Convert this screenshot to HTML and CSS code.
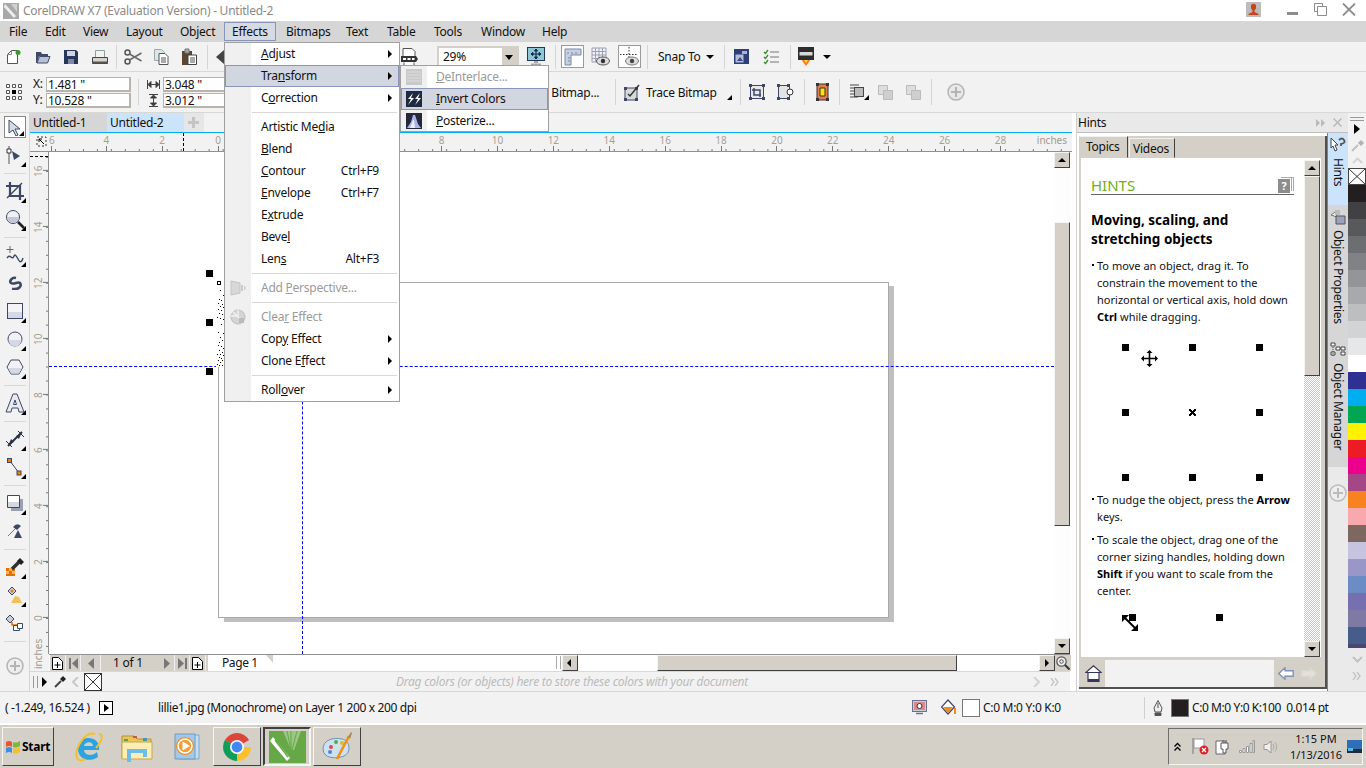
FILE: index.html
```html
<!DOCTYPE html>
<html lang="en">
<head>
<meta charset="utf-8">
<title>CorelDRAW X7</title>
<link rel="stylesheet" href="styles.css">
</head>
<body>
<div class="app">

<header class="titlebar">
  <svg class="t-logo" width="16" height="16" viewBox="0 0 16 16"><rect width="16" height="16" fill="#a9a9a9"/><path d="M2 1l11 12-2 2L1 4z" fill="#eee"/><path d="M8 1h6v8z" fill="#d0d0d0"/></svg>
  <span class="t-text">CorelDRAW X7 (Evaluation Version) - Untitled-2</span>
  <svg class="t-user" width="15" height="15" viewBox="0 0 15 15"><rect width="15" height="15" fill="#bcbcbc"/><path d="M5 3q2.500-2.500 5 0v3.500l-1.500 2v1.500l4 2v1h-10v-1l4-2v-1.500l-1.500-2z" fill="#c8421a"/></svg>
  <span class="t-min"></span>
  <svg class="t-restore" width="13" height="13" viewBox="0 0 13 13"><path d="M.5.5h8v8h-8z" fill="none" stroke="#8c8c8c"/><path d="M3.500 3.500h9v9h-9z" fill="#fff" stroke="#8c8c8c"/></svg>
  <svg class="t-close" width="14" height="13" viewBox="0 0 14 13"><path d="M1 .5l12 12M13 .5l-12 12" stroke="#8c8c8c" stroke-width="1.800"/></svg>
</header>

<nav class="menubar">
  <span class="m m-file">File</span><span class="m m-edit">Edit</span><span class="m m-view">View</span><span class="m m-layout">Layout</span><span class="m m-object">Object</span><span class="m m-effects">Effects</span><span class="m m-bitmaps">Bitmaps</span><span class="m m-text">Text</span><span class="m m-table">Table</span><span class="m m-tools">Tools</span><span class="m m-window">Window</span><span class="m m-help">Help</span>
</nav>

<div class="toolbar">
  <span class="slot s285"><svg width="16" height="16" viewBox="0 0 16 16"><path d="M1.500 5.500l4-4h6v13h-10z" fill="#fff" stroke="#555"/><path d="M1.500 5.500h4v-4" fill="none" stroke="#888"/><circle cx="12" cy="3.500" r="2.500" fill="#3a9a2a"/></svg></span>
  <span class="slot s285"><svg width="16" height="16" viewBox="0 0 16 16"><path d="M1 14V3h5l1 2h6v2H4l-2 7z" fill="#3e4c69"/><path d="M4.500 7.500H15l-2.500 6.500H2z" fill="#b9c1d2" stroke="#3e4c69"/></svg></span>
  <span class="slot s285"><svg width="14" height="14" viewBox="0 0 14 14"><path d="M0 0h12l2 2v12H0z" fill="#26355a"/><path d="M3 1h8v5H3z" fill="#cfd4e0"/><path d="M4 9h6v5H4z" fill="#7e8aa5"/></svg></span>
  <span class="slot s285"><svg width="16" height="14" viewBox="0 0 16 14"><path d="M3.500.5h9v7h-9z" fill="#f2f2f2" stroke="#8aa09a"/><path d="M.5 7.500h15v6H.5z" fill="#d6d4c8" stroke="#444"/><path d="M1 11.500h14v2H1z" fill="#555"/></svg></span>
  <i class="sep sep-a"></i>
  <span class="slot"><svg width="18" height="16" viewBox="0 0 18 16"><circle cx="3.500" cy="3.500" r="2.500" fill="none" stroke="#555" stroke-width="1.500"/><circle cx="3.500" cy="12.500" r="2.500" fill="none" stroke="#555" stroke-width="1.500"/><path d="M5.500 5l12 7M5.500 11l12-7" stroke="#6a6a6a" stroke-width="1.500"/></svg></span>
  <span class="slot"><svg width="15" height="16" viewBox="0 0 15 16"><path d="M.5.500h7l3 3v8h-10z" fill="#dce8e8" stroke="#9aa"/><path d="M5 4.500h6l3 3v8H5z" fill="#fff" stroke="#555"/><path d="M7 9h5M7 11h5M7 13h5" stroke="#555"/></svg></span>
  <span class="slot"><svg width="15" height="17" viewBox="0 0 15 17"><path d="M0 3h10v14H0z" fill="#5a4630"/><path d="M3 1h4v4H3z" fill="#aaa" stroke="#777"/><path d="M6 7h8.500v9.500H6z" fill="#fff" stroke="#444"/><path d="M8 10h5M8 12h5M8 14h5" stroke="#555"/></svg></span>
  <i class="sep sep-b"></i>
  <span class="slot w26"><svg width="10" height="14" viewBox="0 0 10 14"><path d="M8 0L0 7l8 7z" fill="#444"/></svg></span>
  <span class="sp161"></span>
  <span class="slot w28"><svg width="18" height="18" viewBox="0 0 18 18"><path d="M3 .5h9l3 3v5H3z" fill="#fff" stroke="#555"/><path d="M1 8h15l2 3-2 3H1z" fill="#333"/><path d="M4 14.500v3h10v-3" fill="#fff" stroke="#555"/><path d="M3 10h3v2H3zM7.500 10h3v2h-3zM12 10h2.500v2H12z" fill="#fff"/></svg></span>
  <div class="combo"><span class="combo-v">29%</span><span class="combo-b"></span></div>
  <span class="slot w34"><svg width="18" height="20" viewBox="0 0 18 20"><rect x=".5" y=".5" width="17" height="13" fill="#8fc7d6" stroke="#26355a"/><path d="M9 2v10M4 7h10M9 2L7.500 4h3zM9 12l-1.500-2h3zM4 7l2-1.500v3zM14 7l-2-1.500v3z" stroke="#14254a" fill="#14254a"/><path d="M7 14h4v2H7zM4 16.500h10v1.500H4z" fill="#a9a9a9"/></svg></span>
  <i class="sep sep-c"></i>
  <span class="tbtn tb-ruler"><svg width="18" height="18" viewBox="0 0 18 18"><path d="M1 1h16v6H7v10H1z" fill="#c6d0e2" stroke="#7a89a6"/><path d="M4 4v2M8 4v2M12 4v2M4 10h2M4 13h2" stroke="#7a89a6"/></svg></span>
  <span class="slot w33"><svg width="20" height="20" viewBox="0 0 20 20"><path d="M1 1h14v14H1zM1 4.500h14M1 8h14M1 11.500h14M4.500 1v14M8 1v14M11.500 1v14" fill="none" stroke="#9aa0b6"/><ellipse cx="12" cy="14" rx="6.500" ry="4" fill="#ddd" stroke="#555"/><circle cx="12" cy="14" r="2.200" fill="#333"/></svg></span>
  <span class="tbtn tb-guide"><svg width="20" height="20" viewBox="0 0 20 20"><path d="M9 0v15M0 7.500h18" stroke="#333" stroke-dasharray="1.500 1.500"/><ellipse cx="12" cy="14" rx="6.500" ry="4" fill="#ddd" stroke="#777"/><circle cx="12" cy="14" r="2.200" fill="#444"/></svg></span>
  <i class="sep sep-d"></i>
  <span class="snap">Snap To</span><span class="caret caret-snap"></span>
  <i class="sep sep-e"></i>
  <span class="slot w33"><svg width="15" height="15" viewBox="0 0 15 15"><path d="M0 0h15v15H0z" fill="#2e3f78"/><path d="M1.500 5.500h8v8h-8z" fill="#b5bcd8"/><path d="M8 2h5v3H8z" fill="#aab2ce"/><path d="M3 12l3-4 3 4z" fill="#3c4d86"/></svg></span>
  <span class="slot w25"><svg width="16" height="16" viewBox="0 0 16 16"><path d="M1 3l1.500 1.500L5 1M1 8l1.500 1.500L5 6M1 13l1.500 1.500L5 11" fill="none" stroke="#3a8a2e" stroke-width="1.300"/><path d="M7 3h9M7 8h9M7 13h9" stroke="#777" stroke-width="1.200"/></svg></span>
  <i class="sep sep-f"></i>
  <span class="slot w30"><svg width="16" height="19" viewBox="0 0 16 19"><path d="M0 0h16v13H0z" fill="#2c2c2c"/><path d="M1.500 5h13v3.500h-13z" fill="#d7d7d7"/><path d="M4 13h8l-1 2-3 4-3-4z" fill="#ff7a18"/><path d="M6 13h4l-2 3z" fill="#ffd34a"/></svg></span>
  <span class="caret caret-launch"></span>
</div>

<div class="propbar">
  <span class="pb-handles"><svg width="18" height="18" viewBox="0 0 18 18"><path d="M1.500 1.500h3v3h-3zM7.500 1.500h3v3h-3zM13.500 1.500h3v3h-3zM1.500 7.500h3v3h-3zM13.500 7.500h3v3h-3zM1.500 13.500h3v3h-3zM7.500 13.500h3v3h-3zM13.500 13.500h3v3h-3z" fill="#fff" stroke="#555"/><path d="M7 7h4v4H7z" fill="#000"/></svg></span>
  <div class="pb-xy">
    <div class="pb-row"><label>X:</label><span class="inp">1.481 "</span></div>
    <div class="pb-row"><label>Y:</label><span class="inp">10.528 "</span></div>
  </div>
  <i class="sep sep-g"></i>
  <div class="pb-wh">
    <div class="pb-row"><svg width="13" height="9" viewBox="0 0 13 9"><path d="M.5 0v9M12.500 0v9M1 4.500h11M1 4.500l3-3v6zM12 4.500l-3-3v6z" fill="#222" stroke="#444"/></svg><span class="inp">3.048 "</span></div>
    <div class="pb-row"><svg width="9" height="13" viewBox="0 0 9 13"><path d="M0 .5h9M0 12.500h9M4.500 1v11M4.500 1l-3 3h6zM4.500 12l-3-3h6z" fill="#222" stroke="#444"/></svg><span class="inp">3.012 "</span></div>
  </div>
  <span class="pb-bitmap">Edit Bitmap...</span>
  <i class="sep sep-h"></i>
  <span class="slot w20 s-trace"><svg width="16" height="17" viewBox="0 0 16 17"><path d="M1 4h12v12H1z" fill="#d9d9d9" stroke="#3d4866"/><path d="M0 3h3v3H0zM11 3h3v3h-3zM0 14h3v3H0zM11 14h3v3h-3z" fill="#3d4866"/><path d="M4 10l2 2 9-11" fill="none" stroke="#333" stroke-width="1.500"/></svg></span>
  <span class="pb-trace">Trace Bitmap</span>
  <span class="corner-tri tri-trace"></span>
  <i class="sep sep-i"></i>
  <span class="slot w28 s-crop"><svg width="16" height="16" viewBox="0 0 16 16"><path d="M1.500 1.500h13v13h-13z" fill="#e8e8e8" stroke="#3d4866"/><path d="M0 0h3v3H0zM13 0h3v3h-3zM0 13h3v3H0zM13 13h3v3h-3z" fill="#3d4866"/><path d="M5 4v7h7M3 6h8v7" fill="none" stroke="#3d4866" stroke-width="1.500"/></svg></span>
  <span class="slot w28"><svg width="17" height="16" viewBox="0 0 17 16"><path d="M1.500 1.500h11v13h-11z" fill="#e4e4e4" stroke="#3d4866"/><path d="M0 0h3v3H0zM10 0h3v3h-3zM0 13h3v3H0zM10 13h3v3h-3z" fill="#3d4866"/><circle cx="13" cy="8" r="3" fill="#fff" stroke="#333"/></svg></span>
  <i class="sep sep-j"></i>
  <span class="slot w34"><svg width="13" height="18" viewBox="0 0 13 18"><path d="M1 1h11v16H1z" fill="#e87b4a" stroke="#333"/><path d="M4 5h5v8H4z" fill="#ffe500" stroke="#333"/><path d="M0 0h3v3H0zM10 0h3v3h-3zM0 15h3v3H0zM10 15h3v3h-3z" fill="#333"/></svg></span>
  <i class="sep sep-k"></i>
  <span class="slot w36 rel-tri"><svg width="16" height="16" viewBox="0 0 16 16"><path d="M0 1h9M0 4h4M0 7h4M0 10h4M0 13h8" stroke="#444"/><rect x="4.500" y="3.500" width="9" height="9" fill="#bbb" stroke="#444"/></svg></span>
  <span class="slot w18"><svg width="15" height="15" viewBox="0 0 15 15"><path d="M.5.5h9v9h-9z" fill="#ddd" stroke="#bbb"/><path d="M5.500 5.500h9v9h-9z" fill="#cfcfcf" stroke="#bbb"/></svg></span>
  <span class="slot w38"><svg width="15" height="15" viewBox="0 0 15 15"><path d="M.5.5h9v9h-9z" fill="#ddd" stroke="#bbb"/><path d="M5.500 5.500h9v9h-9z" fill="#cfcfcf" stroke="#bbb"/></svg></span>
  <i class="sep sep-l"></i>
  <span class="slot w24 s-plus"><svg width="18" height="18" viewBox="0 0 18 18"><circle cx="9" cy="9" r="8" fill="#e8e8e8" stroke="#b4b4b4" stroke-width="1.500"/><path d="M9 4v10M4 9h10" stroke="#b4b4b4" stroke-width="2"/></svg></span>
</div>

<main class="work">

  <aside class="tools">
    <div class="tool"><span class="tool-sel more"><svg width="14" height="17" viewBox="0 0 14 17"><path d="M1 1l11 9H7l3 6-2 1-3-6-4 3z" fill="#d7dbe6" stroke="#3d4866"/></svg></span></div>
    <div class="tool more"><svg width="18" height="20" viewBox="0 0 18 20"><path d="M3 1v18" stroke="#555"/><path d="M1 4h4v4H1z" fill="#fff" stroke="#333"/><path d="M6 6l8 5-6 4z" fill="#3d4866"/></svg></div>
    <i class="tsep"></i>
    <div class="tool more"><svg width="18" height="18" viewBox="0 0 18 18"><path d="M4 0v14h14M0 4h14v14" fill="none" stroke="#3d4866" stroke-width="2.200"/><path d="M1 16L16 1" stroke="#3d4866" stroke-width="1.500"/></svg></div>
    <div class="tool more"><svg width="20" height="20" viewBox="0 0 20 20"><circle cx="8" cy="8" r="6.500" fill="#f2f2f6" stroke="#3d4866"/><path d="M2 8a6 6 0 0 0 12 0z" fill="#c3c7d6"/><path d="M13 13l6 6" stroke="#222" stroke-width="2.600"/></svg></div>
    <i class="tsep"></i>
    <div class="tool more"><svg width="20" height="20" viewBox="0 0 20 20"><path d="M5 1v7M1.500 4.500h7" stroke="#666"/><path d="M2 13q2-3 4-1t3-1 4 3 5-1" fill="none" stroke="#3d4866" stroke-width="1.400"/></svg></div>
    <div class="tool"><svg width="16" height="14" viewBox="0 0 16 14"><path d="M5 13c7 1 10-3 8-6-2-2-6 2-9 0-2-2 1-6 5-5" fill="none" stroke="#3d4866" stroke-width="2.600"/></svg></div>
    <div class="tool more"><svg width="16" height="16" viewBox="0 0 16 16"><rect x=".5" y=".5" width="15" height="15" fill="#f4f4f8" stroke="#3d4866"/><path d="M1 9h14v6H1z" fill="#d5d7e2"/></svg></div>
    <div class="tool more"><svg width="16" height="16" viewBox="0 0 16 16"><circle cx="8" cy="8" r="7" fill="#f2f2f6" stroke="#3d4866"/><path d="M1.500 9h13a6.500 6.500 0 0 1-13 0z" fill="#d5d7e2"/></svg></div>
    <div class="tool more"><svg width="18" height="16" viewBox="0 0 18 16"><path d="M5 1h8l4 7-4 7H5L1 8z" fill="#f2f2f6" stroke="#3d4866"/><path d="M2 9h14l-3 5.500H5z" fill="#d5d7e2"/></svg></div>
    <i class="tsep"></i>
    <div class="tool more"><svg width="20" height="20" viewBox="0 0 20 20"><path d="M1 19L8 1h4l7 18h-5l-1-4H7l-1 4z" fill="#e8eaf0" stroke="#3d4866"/><path d="M8.500 11.500L10 7l1.500 4.500z" fill="#fff" stroke="#3d4866"/></svg></div>
    <i class="tsep"></i>
    <div class="tool more"><svg width="18" height="16" viewBox="0 0 18 16"><path d="M2 15L16 1" stroke="#2a3146" stroke-width="2"/><path d="M0 10l6 6M12 0l6 6" stroke="#2a3146"/><path d="M3 13l2-5 3 3zM15 3l-2 5-3-3z" fill="#2a3146"/></svg></div>
    <div class="tool more"><svg width="16" height="18" viewBox="0 0 16 18"><path d="M3 3l9 12" stroke="#444"/><rect x=".5" y=".5" width="4" height="4" fill="#f57c00" stroke="#3d4866"/><rect x="10" y="13" width="4" height="4" fill="#f57c00" stroke="#3d4866"/></svg></div>
    <i class="tsep"></i>
    <div class="tool more"><svg width="16" height="16" viewBox="0 0 16 16"><path d="M4 4h12v12H4z" fill="#9a9fb4"/><path d="M.5.500h12v12H.5z" fill="#fff" stroke="#3d4866"/><path d="M1 7h11v5H1z" fill="#d5d7e2"/></svg></div>
    <div class="tool"><svg width="16" height="16" viewBox="0 0 16 16"><path d="M1 13l8-8" stroke="#777"/><path d="M6 4q4-5 8-1l-4 4z" fill="#3d4866"/><path d="M11 7l4 8H7z" fill="#3d4866"/></svg></div>
    <i class="tsep"></i>
    <div class="tool more"><svg width="18" height="18" viewBox="0 0 18 18"><path d="M0 10h9v8H0z" fill="#e07000"/><path d="M3 10h3v3H3zM0 13h3v3H0zM6 13h3v3H6z" fill="#ffb060"/><path d="M6 11l8-8" stroke="#333" stroke-width="3.500"/><path d="M11 3l3-3 4 4-3 3z" fill="#222"/></svg></div>
    <div class="tool more"><svg width="14" height="18" viewBox="0 0 14 18"><path d="M0 5l4-4 4 4-4 4z" fill="#ccd" stroke="#3d4866"/><circle cx="4" cy="5" r="1.500" fill="#f57c00"/><path d="M7 10l4 1 3 6H3z" fill="#f3c05a"/></svg></div>
    <div class="tool"><svg width="17" height="18" viewBox="0 0 17 18"><path d="M0 5l4-4 4 4-4 4z" fill="#ccd" stroke="#3d4866"/><path d="M6 8v3h5" fill="none" stroke="#e07000" stroke-width="1.500"/><path d="M7.500 11.500h6v5h-6z" fill="#fff" stroke="#3d4866"/><path d="M11.500 9.500h5v5h-5z" fill="#fff" stroke="#3d4866"/></svg></div>
    <i class="tsep"></i>
    <div class="tool tool-plus"><svg width="18" height="18" viewBox="0 0 18 18"><circle cx="9" cy="9" r="8" fill="#eee" stroke="#b4b4b4" stroke-width="1.500"/><path d="M9 4v10M4 9h10" stroke="#b4b4b4" stroke-width="2"/></svg></div>
  </aside>

  <section class="doc">
    <div class="doctabs">
      <span class="dt dt-a">Untitled-1</span><span class="dt dt-b">Untitled-2</span><span class="dt-plus"></span>
    </div>
    <div class="rtop-row">
      <span class="corner"><svg width="11" height="11" viewBox="0 0 11 11"><path d="M1 1h9v9H1z" fill="none" stroke="#333" stroke-dasharray="2 2"/><path d="M3 3l5 5M3 3l3 0M3 3v3" stroke="#000"/></svg></span>
      <div class="rtop">
        <b>6</b><b>4</b><b>2</b><b>0</b><b>2</b><b>4</b><b>6</b><b>8</b><b>10</b><b>12</b><b>14</b><b>16</b><b>18</b><b>20</b><b>22</b><b>24</b><b>26</b><b>28</b>
        <span class="rinches">inches</span>
        <i class="rmark"></i>
      </div>
    </div>
    <div class="canvas-row">
      <div class="rleft">
        <b>16</b><b>14</b><b>12</b><b>10</b><b>8</b><b>6</b><b>4</b><b>2</b><b>0</b>
        <span class="rinches-v">inches</span>
        <i class="rmark-h"></i>
      </div>
      <div class="canvas">
        <div class="page-shadow"></div>
        <div class="page"></div>
        <i class="guide-h"></i>
        <i class="guide-v"></i>
        <svg class="speck" width="10" height="87" viewBox="0 0 10 87"><path d="M1 1h4v4H1zM2 2v2h2V2z" fill-rule="evenodd"/><path d="M4 10h1v1H4zM7 15h1v1H7zM3 19h1v1H3zM5 20h1v1H5zM2 23h1v1H2zM6 24h1v1H6zM4 26h1v1H4zM7 27h1v1H7zM2 29h1v1H2zM5 30h1v1H5zM3 33h1v1H3zM6 34h1v1H6zM1 37h1v1H1zM4 38h1v1H4zM7 39h1v1H7zM5 44h1v1H5zM2 52h1v1H2zM7 53h1v1H7zM4 57h1v1H4zM6 60h1v1H6zM3 62h1v1H3zM2 65h1v1H2zM5 66h1v1H5zM7 68h1v1H7zM3 70h1v1H3zM6 72h1v1H6zM1 74h1v1H1zM4 74h1v1H4zM7 75h1v1H7zM3 77h1v1H3zM5 78h1v1H5zM2 80h1v1H2zM6 80h1v1H6zM4 82h1v1H4zM1 84h1v1H1zM3 85h1v1H3zM6 85h1v1H6zM8 84h1v1H8z"/></svg>
        <i class="h h1"></i><i class="h h2"></i><i class="h h3"></i>
      </div>
      <div class="vscroll">
        <span class="sb sb-up"></span>
        <span class="vtrack1"></span>
        <span class="thumb-v"></span>
        <span class="vtrack2"></span>
        <span class="sb sb-down"></span>
      </div>
    </div>
    <div class="hscroll-row">
      <div class="pnav">
        <span class="pn pn-add"><svg width="11" height="13" viewBox="0 0 11 13"><path d="M.5.500h6l4 4v8h-10z" fill="#fff" stroke="#000"/><path d="M5.500 5v6M2.500 8h6" stroke="#000"/></svg></span>
        <span class="pn pn-g"><svg width="9" height="11" viewBox="0 0 9 11"><path d="M0 0h2v11H0zM9 0v11L3 5.500z" fill="#777"/></svg></span>
        <span class="pn pn-g2"><svg width="6" height="11" viewBox="0 0 6 11"><path d="M6 0v11L0 5.500z" fill="#777"/></svg></span>
        <span class="pn-label">1 of 1</span>
        <span class="pn pn-g3"><svg width="6" height="11" viewBox="0 0 6 11"><path d="M0 0v11l6-5.500z" fill="#777"/></svg></span>
        <span class="pn pn-g"><svg width="9" height="11" viewBox="0 0 9 11"><path d="M9 0H7v11h2zM0 0v11l6-5.500z" fill="#777"/></svg></span>
        <span class="pn pn-add"><svg width="11" height="13" viewBox="0 0 11 13"><path d="M.5.500h6l4 4v8h-10z" fill="#fff" stroke="#000"/><path d="M5.500 5v6M2.500 8h6" stroke="#000"/></svg></span>
        <span class="ptab">Page 1</span>
      </div>
      <span class="hsplit"></span>
      <span class="sb sb-left"></span>
      <span class="hgap1"></span>
      <span class="thumb-h"></span>
      <span class="hgap2"></span>
      <span class="sb sb-right"></span>
      <span class="zoomtool"><svg width="14" height="14" viewBox="0 0 14 14"><circle cx="5.500" cy="5.500" r="4.700" fill="#eee" stroke="#555" stroke-width="1.200"/><circle cx="5.500" cy="5.500" r="1.800" fill="none" stroke="#555"/><path d="M9 9l4.500 4.500" stroke="#333" stroke-width="2"/></svg></span>
    </div>
    <div class="colorbar">
      <i class="cb-grip"></i>
      <span class="cb-play"></span>
      <svg class="cb-drop" width="12" height="12" viewBox="0 0 12 12"><path d="M1 11l6-6" stroke="#444" stroke-width="2"/><path d="M6 3l3-3 3 3-3 3z" fill="#222"/></svg>
      <svg class="cb-lt" width="7" height="10" viewBox="0 0 7 10"><path d="M6 0L1 5l5 5" fill="none" stroke="#c9c9c9" stroke-width="2"/></svg>
      <svg class="cb-x" width="18" height="18" viewBox="0 0 18 18"><rect x=".5" y=".5" width="17" height="17" fill="#fff" stroke="#333"/><path d="M1 1l16 16M17 1L1 17" stroke="#333"/></svg>
      <span class="cb-text">Drag colors (or objects) here to store these colors with your document</span>
      <svg class="cb-rt" width="8" height="10" viewBox="0 0 8 10"><path d="M1 0l5 5-5 5" fill="none" stroke="#d2d2d2" stroke-width="2"/></svg>
      <svg class="cb-dbl" width="10" height="8" viewBox="0 0 10 8"><path d="M1 0l3 4-3 4M5 0l3 4-3 4" fill="none" stroke="#c4c4c4" stroke-width="1.300"/></svg>
    </div>
  </section>

  <section class="hintsdock">
    <div class="hd-title"><span class="hd-name">Hints</span>
      <svg class="hd-ff" width="9" height="8" viewBox="0 0 9 8"><path d="M0 0l4 4-4 4zM5 0l4 4-4 4z" fill="#b9b9b9"/></svg>
    </div>
    <div class="hd-body">
      <div class="hd-tabs"><span class="ht ht-on">Topics</span><span class="ht ht-off">Videos</span></div>
      <div class="hd-pane">
        <article class="hd-content">
          <h2 class="hc-head">HINTS<svg width="16" height="16" viewBox="0 0 16 16"><path d="M13.500 0v14M15.500 0v14M3 .5h12" stroke="#aaa" fill="none"/><rect y="2" width="12" height="14" fill="#8d8d8d"/><text x="6" y="13" text-anchor="middle" fill="#fff" font-size="11" font-weight="700" font-family="Noto Sans">?</text></svg></h2>
          <h3 class="hc-title">Moving, scaling, and stretching objects</h3>
          <ul class="hc-list"><li>To move an object, drag it. To constrain the movement to the horizontal or vertical axis, hold down <b>Ctrl</b> while dragging.</li></ul>
          <div class="hc-grid">
            <i></i><i></i><i></i><i></i><em class="hc-x"></em><i></i><i></i><i></i><i></i>
            <svg class="hc-move" width="17" height="17" viewBox="0 0 17 17"><path d="M8.500 1v15M1 8.500h15" stroke="#000" stroke-width="1.600"/><path d="M8.500 0l-3 3h6zM8.500 17l-3-3h6zM0 8.500l3-3v6zM17 8.500l-3-3v6z"/></svg>
          </div>
          <ul class="hc-list hc-l2">
            <li>To nudge the object, press the <b>Arrow</b> keys.</li>
            <li>To scale the object, drag one of the corner sizing handles, holding down <b>Shift</b> if you want to scale from the center.</li>
          </ul>
          <div class="hc-grid2"><i></i><i></i>
            <svg class="hc-diag" width="16" height="16" viewBox="0 0 16 16"><path d="M2 2l12 12" stroke="#000" stroke-width="2"/><path d="M0 0h7L0 7zM16 16H9l7-7z"/></svg>
          </div>
        </article>
        <div class="hd-scroll">
          <span class="sb sb-up"></span>
          <span class="hd-thumb"></span>
          <span class="hd-hatch"></span>
          <span class="sb sb-down"></span>
        </div>
      </div>
      <div class="hd-foot">
        <span class="hf-home"><svg width="17" height="17" viewBox="0 0 17 17"><path d="M8.500.8L.8 7.500h15.400z" fill="#fff" stroke="#33395a" stroke-width="1.200"/><path d="M3 7.500h11v9H3z" fill="#fff" stroke="#33395a" stroke-width="1.200"/><path d="M3 14h11v2.500H3z" fill="#33395a"/></svg></span>
        <span class="hf-mid"></span>
        <span class="hf-arrows">
          <svg width="16" height="13" viewBox="0 0 16 13"><path d="M.8 6.500L7 .8v3h8.200v5.400H7v3z" fill="#fff" stroke="#7f92b8" stroke-width="1.400"/></svg>
          <svg width="16" height="13" viewBox="0 0 16 13"><path d="M15.200 6.500L9 .8v3H.8v5.400H9v3z" fill="#e3e1db" stroke="#dbd8d1" stroke-width="1.400"/></svg>
        </span>
      </div>
    </div>
  </section>

  <section class="dockers">
    <div class="dk-top"><svg width="9" height="9" viewBox="0 0 9 9"><path d="M.5.500l8 8M8.500.500l-8 8" stroke="#b9b9b9" stroke-width="1.500"/></svg></div>
    <div class="dk-list">
      <div class="dk dk-on"><svg width="16" height="16" viewBox="0 0 16 16"><path d="M1 1l7 7H5l2 5-2 1-2-5-2 2z" fill="#fff" stroke="#444"/><path d="M9 3q3-3 5 0t-3 4v2" fill="none" stroke="#555" stroke-width="1.800"/></svg><span>Hints</span></div>
      <div class="dk"><svg width="16" height="16" viewBox="0 0 16 16"><path d="M5 3L1 6l6 2z" fill="#eee" stroke="#777"/><path d="M6 7h9v8H6z" fill="#9aa2c0" stroke="#555"/><path d="M5 1h5v5H5z" fill="#bbb"/></svg><span>Object Properties</span></div>
      <div class="dk dk3"><svg width="16" height="16" viewBox="0 0 16 16"><path d="M1 1h4v3H1zM6 5h4v3H6zM11 5h4v3h-4zM1 10h4v3H1zM11 10h4v3h-4z" fill="#fff" stroke="#444"/><path d="M3 5v10" stroke="#444" stroke-dasharray="1 1"/></svg><span>Object Manager</span></div>
      <div class="dk-plus"><svg width="18" height="18" viewBox="0 0 18 18"><circle cx="9" cy="9" r="8" fill="#eee" stroke="#bbb" stroke-width="1.500"/><path d="M9 4v10M4 9h10" stroke="#bbb" stroke-width="2"/></svg></div>
    </div>
  </section>

  <aside class="palette">
    <div class="pal-top">
      <i class="pal-grip"></i>
      <span class="pal-play"></span>
      <svg class="pal-drop" width="13" height="13" viewBox="0 0 13 13"><path d="M1 12l6-6" stroke="#c0c0c0" stroke-width="2"/><path d="M7 4l3-3 3 3-3 3z" fill="#b0b0b0"/></svg>
      <svg class="pal-up" width="11" height="7" viewBox="0 0 11 7"><path d="M1 6l4.500-4.500L10 6" fill="none" stroke="#d4d4d4" stroke-width="2"/></svg>
    </div>
    <svg class="pal-none" width="18" height="17" viewBox="0 0 18 17"><rect x=".5" y=".5" width="17" height="16" fill="#fff" stroke="#444"/><path d="M1 1l16 15M17 1L1 16" stroke="#333"/></svg>
    <div class="swatches">
      <i class="c01"></i><i class="c02"></i><i class="c03"></i><i class="c04"></i><i class="c05"></i><i class="c06"></i><i class="c07"></i><i class="c08"></i><i class="c09"></i><i class="c10"></i><i class="c11"></i><i class="c12"></i><i class="c13"></i><i class="c14"></i><i class="c15"></i><i class="c16"></i><i class="c17"></i><i class="c18"></i><i class="c19"></i><i class="c20"></i><i class="c21"></i><i class="c22"></i><i class="c23"></i><i class="c24"></i><i class="c25"></i><i class="c26"></i><i class="c27"></i><i class="c28"></i>
    </div>
    <div class="pal-bot">
      <svg width="11" height="7" viewBox="0 0 11 7"><path d="M1 1l4.500 4.500L10 1" fill="none" stroke="#bfc2c9" stroke-width="2"/></svg>
      <svg width="10" height="8" viewBox="0 0 10 8"><path d="M1 0l3 4-3 4M5 0l3 4-3 4" fill="none" stroke="#bfc2c9" stroke-width="1.300"/></svg>
    </div>
  </aside>
</main>

<footer class="status">
  <span class="st-xy">( -1.249, 16.524 )</span>
  <span class="st-box"></span>
  <span class="st-info">lillie1.jpg (Monochrome) on Layer 1 200 x 200 dpi</span>
  <svg class="st-mon" width="15" height="15" viewBox="0 0 15 15"><rect x=".5" y=".5" width="14" height="11" fill="#c9ccdb" stroke="#6b728f"/><rect x="2" y="2" width="11" height="8" fill="#d98a8a"/><circle cx="7.500" cy="6" r="2.500" fill="#fff" stroke="#333"/><path d="M4 13.500h7" stroke="#6b728f" stroke-width="1.500"/></svg>
  <svg class="st-fill" width="16" height="17" viewBox="0 0 16 17"><path d="M7 1L.5 8 7 15l6.500-7z" fill="#fff" stroke="#3d4866" stroke-width="1.200"/><path d="M2 8h10l-5 6z" fill="#f08a1a"/><path d="M14 9v6" stroke="#f08a1a" stroke-width="2"/></svg>
  <span class="st-swatch st-white"></span>
  <span class="st-cmyk">C:0 M:0 Y:0 K:0</span>
  <i class="st-sep"></i>
  <svg class="st-pen" width="10" height="16" viewBox="0 0 10 16"><path d="M5 .5L9 8l-1 4H2L1 8z" fill="#eee" stroke="#555"/><path d="M2 13h6v2.500H2zM5 3v5" fill="#555" stroke="#555"/></svg>
  <span class="st-swatch st-black"></span>
  <span class="st-cmyk2">C:0 M:0 Y:0 K:100&nbsp; 0.014 pt</span>
</footer>

<div class="taskbar">
  <span class="tk-start"><svg width="16" height="15" viewBox="0 0 16 15"><path d="M1 3q3-2 6 0v5q-3-2-6 0z" fill="#e8582a"/><path d="M8 3q3 1.500 7-1v5q-4 2.500-7 1z" fill="#7cb93a"/><path d="M1 9q3-2 6 0v5q-3-2-6 0z" fill="#3f8fe0"/><path d="M8 9q3 1.500 7-1v5q-4 2.500-7 1z" fill="#f6c02c"/></svg><b>Start</b></span>
  <span class="tk-ico tk-ie"><svg width="30" height="32" viewBox="0 0 30 32"><path d="M15 7c8 0 12 5 11 12H11c0 5 8 7 13 2l1 5c-9 6-20 2-20-8C5 12 9 7 15 7zm-4 8h9c0-5-8-5-9 0z" fill="#2ba4e0"/><path d="M26 3c5 0 3 7-3 14M22 3C12 0 1 18 4 27c1 3 5 3 8 1" fill="none" stroke="#f4c02a" stroke-width="2"/></svg></span>
  <span class="tk-ico tk-fold"><svg width="32" height="30" viewBox="0 0 32 30"><path d="M1 4h12l3 3h14v19H1z" fill="#e9c55d" stroke="#b79331"/><path d="M3 7h4v2H3z" fill="#5aa14a"/><path d="M12 4h4v2h-4z" fill="#c54"/><path d="M22 6h4v3h-4z" fill="#49a"/><path d="M1 10h30v17H1z" fill="#fbeeb5" stroke="#caa64a"/><path d="M6 17h20v8h-4v-4H10v9H6z" fill="#6ebde8"/></svg></span>
  <span class="tk-ico tk-wmp"><svg width="30" height="28" viewBox="0 0 30 28"><path d="M8 2h20v24H8z" fill="#c7dcef" stroke="#7fa8cc"/><path d="M4 1h20v25H4z" fill="#a4c8e6" stroke="#6d9cc4"/><circle cx="14" cy="13" r="9" fill="#f08a1a"/><circle cx="14" cy="13" r="7" fill="#f59f33" stroke="#fff" stroke-width="1.600"/><path d="M11.500 8.500l7.500 4.500-7.500 4.500z" fill="#fff"/></svg></span>
  <span class="tk-btn tk-chrome"><svg width="30" height="30" viewBox="0 0 30 30"><path d="M15 15L2.900 8A14 14 0 0 1 27.100 8z" fill="#db4437"/><path d="M15 15h14A14 14 0 0 1 15 29z" fill="#fbc02d"/><path d="M15 15v14A14 14 0 0 1 2.900 8z" fill="#0f9d58"/><circle cx="15" cy="15" r="7" fill="#fff"/><circle cx="15" cy="15" r="5.400" fill="#4285f4"/></svg></span>
  <span class="tk-btn tk-corel"><svg width="37" height="32" viewBox="0 0 37 32"><rect width="37" height="32" fill="#66a846"/><path d="M4 6l17 21-3 3L1 10z" fill="#fff"/><path d="M6 9l13 17" stroke="#66a846" stroke-width="1.500"/><path d="M14 0h18l-7 19h-3z" fill="#9bc785"/><path d="M22 0v19M18 0l4 19M28 0l-5 19" stroke="#66a846"/></svg></span>
  <span class="tk-btn tk-paint"><svg width="32" height="32" viewBox="0 0 32 32"><path d="M2 18C2 9 12 6 21 8s9 14 2 17-21 3-21-7z" fill="#cfe0ef" stroke="#6e93b4"/><circle cx="10" cy="16" r="2" fill="#d94a4a"/><circle cx="15" cy="11" r="2" fill="#49b04a"/><circle cx="21" cy="12" r="2" fill="#e8b52d"/><circle cx="9" cy="21" r="2" fill="#4a86d9"/><path d="M16 28L28 5" stroke="#e8941a" stroke-width="2.600"/><path d="M27 6l3-5 1 1-2 6z" fill="#a8855a"/></svg></span>
  <span class="tk-fill"></span>
  <div class="tray">
    <svg class="tr-up" width="7" height="10" viewBox="0 0 7 10"><path d="M.5 4.500l3-3 3 3M.5 8.500l3-3 3 3" fill="none" stroke="#000" stroke-width="1.300"/></svg>
    <svg class="tr-flag" width="17" height="17" viewBox="0 0 17 17"><path d="M1 0v16" stroke="#777"/><path d="M2 1h10v9H2z" fill="#fff" stroke="#999"/><circle cx="12" cy="12" r="4.500" fill="#d9232a"/><path d="M10 10l4 4M14 10l-4 4" stroke="#fff" stroke-width="1.200"/></svg>
    <svg class="tr-pow" width="15" height="16" viewBox="0 0 15 16"><path d="M1 2h9v13H1z" fill="#fff" stroke="#666"/><path d="M6 4h7v6h-2v4H8v-4H6z" fill="#fff" stroke="#555"/><path d="M8 1v3M11 1v3" stroke="#555"/></svg>
    <svg class="tr-net" width="16" height="13" viewBox="0 0 16 13"><path d="M.5 10.500h2v2h-2zM4 8.500h2v4H4zM7.500 6.500h2v6h-2zM11 3.500h2v9h-2zM14 .5h1.500v12H14z" fill="#fff" stroke="#999"/></svg>
    <svg class="tr-vol" width="15" height="14" viewBox="0 0 15 14"><path d="M1 4.500h3L8 1v12L4 9.500H1z" fill="#eee" stroke="#999"/><path d="M10 4q2 3 0 6M12 2.500q3.500 4.500 0 9" fill="none" stroke="#aaa"/></svg>
    <div class="clock"><span>1:15 PM</span><span>1/13/2016</span></div>
    <svg class="tr-desk" width="15" height="13" viewBox="0 0 15 13"><rect width="15" height="13" fill="#2e70b8"/><path d="M0 9h15v4H0z" fill="#222d3c"/><path d="M1 8h5v3H1z" fill="#5ab8e0"/></svg>
  </div>
</div>

<!-- Effects menu: floats over the workspace -->
<div class="popup effects">
  <div class="pi arrow"><span><u>A</u>djust</span></div>
  <div class="pi arrow pi-sel"><span>Tra<u>n</u>sform</span></div>
  <div class="pi arrow"><span>C<u>o</u>rrection</span></div>
  <i class="psep"></i>
  <div class="pi"><span>Artistic Me<u>d</u>ia</span></div>
  <div class="pi"><span><u>B</u>lend</span></div>
  <div class="pi"><span><u>C</u>ontour</span><kbd>Ctrl+F9</kbd></div>
  <div class="pi"><span><u>E</u>nvelope</span><kbd>Ctrl+F7</kbd></div>
  <div class="pi"><span>E<u>x</u>trude</span></div>
  <div class="pi"><span>Beve<u>l</u></span></div>
  <div class="pi"><span>Len<u>s</u></span><kbd>Alt+F3</kbd></div>
  <i class="psep"></i>
  <div class="pi pi-dis"><svg class="pico" width="16" height="16" viewBox="0 0 16 16"><path d="M1 1l9 2v10l-9 2z" fill="#d8d8d8" stroke="#c4c4c4"/><path d="M11 5h2v6h-2zM14 6h1.500v4H14z" fill="#ccc"/></svg><span>Add <u>P</u>erspective...</span></div>
  <i class="psep"></i>
  <div class="pi pi-dis"><svg class="pico" width="16" height="16" viewBox="0 0 16 16"><circle cx="8" cy="8" r="7" fill="#d4d4d4" stroke="#bdbdbd"/><path d="M3 3l10 10M8 1v6H1" stroke="#f0f0f0" stroke-width="1.500" fill="none"/><path d="M9 9h5v5H9z" fill="#bbb"/></svg><span>Clea<u>r</u> Effect</span></div>
  <div class="pi arrow"><span>Cop<u>y</u> Effect</span></div>
  <div class="pi arrow"><span>Clone E<u>f</u>fect</span></div>
  <i class="psep"></i>
  <div class="pi arrow"><span>Roll<u>o</u>ver</span></div>
</div>

<div class="popup submenu">
  <div class="pi pi-dis"><svg class="pico" width="16" height="16" viewBox="0 0 16 16"><rect width="16" height="16" fill="#c9c9c9"/><path d="M1 3h14M1 6h14M1 9h14M1 12h14" stroke="#ddd"/></svg><span><u>D</u>eInterlace...</span></div>
  <div class="pi pi-sel"><svg class="pico" width="16" height="16" viewBox="0 0 16 16"><rect width="16" height="16" fill="#1e2a40"/><path d="M7 2L2 8h3l-3 6 6-7H5zM14 2L9 8h3l-3 6 6-7h-3z" fill="#fff"/></svg><span><u>I</u>nvert Colors</span></div>
  <div class="pi"><svg class="pico" width="16" height="16" viewBox="0 0 16 16"><rect width="16" height="16" fill="#24283a"/><path d="M1 15l4-6 2-7h2l3 9 3 4z" fill="#aab4e8"/><path d="M4 15l3-8h1l1 8z" fill="#eef"/></svg><span><u>P</u>osterize...</span></div>
</div>

</div>
</body>
</html>
```
FILE: styles.css
```css
* { box-sizing: border-box; }
html, body { margin: 0; padding: 0; }
body { width: 1366px; height: 768px; overflow: hidden; background: #fff;
  font: 12px/16px "Noto Sans", "Liberation Sans", sans-serif; letter-spacing: -.25px; color: #111; }
i, em { font-style: normal; }
svg { display: block; flex: none; }

.app { position: relative; width: 1366px; height: 768px; display: flex; flex-direction: column; overflow: hidden; }

/* Title bar */
.titlebar { height: 21px; flex: none; display: flex; align-items: center; background: #fff; padding-left: 3px; }
.t-text { margin-left: 4px; color: #8a8a8a; }
.t-user { margin-left: auto; margin-top: -3px; }
.t-min { width: 11px; height: 3px; background: #8c8c8c; margin-left: 26px; margin-top: 6px; }
.t-restore { margin-left: 16px; margin-top: -3px; }
.t-close { margin-left: 15px; margin-right: 10px; margin-top: -3px; }

/* Menu bar */
.menubar { height: 21px; flex: none; display: flex; align-items: center; background: #d6d6d6; }
.m { display: block; line-height: 17px; height: 19px; padding-left: 8px; border: 1px solid transparent; border-width: 1px 0 1px 1px; }
.m-file { width: 36px; }
.m-edit { width: 38px; }
.m-view { width: 43px; }
.m-layout { width: 54px; }
.m-object { width: 46px; }
.m-effects { width: 52px; border: 1px solid #8a96b8; background: #d6dae3; padding-left: 7px; margin-left: 7px; }
.m-bitmaps { width: 60px; margin-left: 1px; }
.m-text { width: 41px; }
.m-table { width: 47px; }
.m-tools { width: 47px; }
.m-window { width: 61px; }
.m-help { width: 40px; }

/* Toolbars */
.toolbar { height: 30px; flex: none; display: flex; align-items: center; background: #f2f2f2; border-bottom: 1px solid #d8d8d8; }
.slot { flex: none; width: 28px; height: 28px; display: flex; align-items: center; justify-content: center; }
.s285 { width: 28.5px; }
.w18 { width: 18px; } .w20 { width: 20px; } .w24 { width: 24px; } .w25 { width: 25px; } .w26 { width: 26px; } .w28 { width: 28px; } .w30 { width: 30px; } .w33 { width: 33px; } .w34 { width: 34px; } .w36 { width: 36px; } .w38 { width: 38px; }
.sep { flex: none; display: block; width: 1px; height: 24px; background: #d4d4d4; }
.sep-a { margin: 0 2px 0 2px; }
.sep-b { margin: 0 0 0 4px; }
.sp161 { flex: none; width: 161px; }
.combo { flex: none; width: 82px; height: 21px; margin-left: 14px; background: #fff; border: 2px solid #d4d0c8; display: flex; justify-content: space-between; }
.combo-v { padding-left: 4px; line-height: 18px; }
.combo-b { width: 15px; background: #d4d0c8; position: relative; }
.combo-b::before { content: ""; position: absolute; left: 3px; top: 7px; border: 4px solid transparent; border-top: 5px solid #000; border-bottom: 0; }
.sep-c { margin-left: 2px; }
.tbtn { flex: none; width: 23px; height: 23px; border: 1px solid #9a9a9a; background: #fff; display: flex; align-items: center; justify-content: center; }
.tb-ruler { margin-left: 5px; }
.tb-guide { margin-left: 1px; }
.sep-d { margin-left: 6px; }
.snap { margin-left: 10px; flex: none; width: 46px; }
.caret { flex: none; width: 0; height: 0; border: 4px solid transparent; border-top: 4px solid #000; border-bottom: 0; }
.caret-snap { margin-left: 2px; }
.sep-e { margin-left: 10px; }
.sep-f { margin-left: 7px; }
.caret-launch { margin-left: 2px; }

.propbar { height: 41px; flex: none; display: flex; align-items: center; background: #f2f2f2; border-bottom: 1px solid #d8d8d8; }
.pb-handles { margin-left: 5px; flex: none; }
.pb-xy, .pb-wh { display: flex; flex-direction: column; gap: 1px; flex: none; }
.pb-xy { margin-left: 10px; }
.pb-row { display: flex; align-items: center; height: 15px; }
.pb-row label { width: 13px; flex: none; }
.inp { display: block; height: 15px; line-height: 14px; background: #fff; border: 1px solid #b8b4aa; border-width: 1px 2px 2px 1px; padding-left: 1px; }
.pb-xy .inp { width: 85px; }
.sep-g { margin-left: 7px; }
.pb-wh { margin-left: 8px; width: 140px; }
.pb-wh .pb-row svg { width: 13px; margin-right: 3px; }
.pb-wh .inp { width: 90px; }
.pb-bitmap { margin: 2px 0 0 241px; width: 87px; flex: none; white-space: nowrap; }
.s-trace { margin-left: 6px; }
.pb-trace { margin: 2px 0 0 4px; flex: none; width: 78px; }
.corner-tri, .more::after { display: block; width: 0; height: 0; border-style: solid; border-width: 0 0 5px 5px; border-color: transparent transparent #000 transparent; }
.tri-trace { margin: 10px 0 0 3px; flex: none; }
.sep-i { margin-left: 8px; }
.s-crop { margin-left: 2px; }
.sep-j { margin-left: 5px; }
.sep-l { margin-left: -1px; }
.s-plus { margin-left: 12px; }
.sep-g, .sep-h, .sep-i, .sep-j, .sep-k, .sep-l { height: 26px; }
.rel-tri { position: relative; }
.rel-tri::after { content: ""; position: absolute; right: 7px; bottom: 6px; border-style: solid; border-width: 0 0 5px 5px; border-color: transparent transparent #000 transparent; }

/* Work area */
.work { flex: none; height: 578px; display: flex; }
.tools { flex: none; width: 30px; background: #f2f2f2; border-right: 1px solid #d4d4d4; display: flex; flex-direction: column; align-items: center; }
.tool { position: relative; flex: none; width: 29px; height: 28px; display: flex; align-items: center; justify-content: center; }
.more { position: relative; }
.more::after { content: ""; position: absolute; right: 3px; bottom: 2px; }
.tool-sel { width: 22px; height: 22px; background: #fff; border: 1px solid #888; display: flex; align-items: center; justify-content: center; }
.tool-sel::after { right: 1px; bottom: 1px; }
.tsep { flex: none; display: block; width: 22px; height: 1px; margin: 4px 0 3px; background: #d8d8d8; }
.tool-plus { margin-top: 7px; }

.doc { flex: none; width: 1046px; display: flex; flex-direction: column; background: #fff; }
.doctabs { flex: none; height: 20px; background: #f2f2f2; border-bottom: 1px solid #00aeef; display: flex; margin-right: 4px; }
.dt { flex: none; width: 77px; height: 19px; line-height: 19px; padding-left: 3px; }
.dt-a { background: #d6d6d6; }
.dt-b { background: #cce4fb; }
.dt-plus { flex: none; width: 20px; height: 19px; background: #e6e6e6; position: relative; }
.dt-plus::before { content: ""; position: absolute; left: 4px; top: 4px; width: 11px; height: 11px;
  background: linear-gradient(#c4c4c4,#c4c4c4) center/11px 3px no-repeat, linear-gradient(#c4c4c4,#c4c4c4) center/3px 11px no-repeat; }

.rtop-row { flex: none; height: 19px; margin-right: 4px; display: flex; background: #f2f2f2; border-bottom: 1px solid #909090; }
.corner { flex: none; width: 19px; padding: 3px 0 0 6px; }
.rtop { position: relative; flex: none; width: 1021px; height: 18px; display: flex; overflow: hidden;
  background: linear-gradient(90deg, #777 1px, transparent 1px) 6px 100% / 13.975px 2px repeat-x; }
.rtop b { flex: none; width: 55.9px; height: 18px; text-align: center; font: 10px/14px "Noto Sans", sans-serif; letter-spacing: 0; color: #a8a090; }
.rtop b:first-child { width: 29.3px; text-align: left; }
.rtop b::after { content: ""; display: block; width: 1px; height: 5px; margin: -1px auto 0; background: #777; }
.rtop b:first-child::after { margin-left: 2px; }
.rinches { position: absolute; right: 3px; top: 0; font-size: 10px; line-height: 14px; letter-spacing: 0; color: #a09a90; background: #f2f2f2; padding-left: 4px; }
.rmark { position: absolute; left: 134px; top: 0; height: 18px; border-left: 1px dashed #000; }

.canvas-row { flex: none; height: 502px; display: flex; }
.rleft { position: relative; z-index: 1; flex: none; width: 19px; height: 502px; clip-path: inset(0 0 -19px 0);
  background: linear-gradient(#777 1px, transparent 1px) 100% 5px / 2px 13.975px repeat-y #f2f2f2; border-right: 1px solid #909090; display: flex; flex-direction: column; }
.rleft b { position: relative; flex: none; width: 18px; height: 55.9px; padding-right: 3px; display: flex; justify-content: center; align-items: flex-start;
  writing-mode: vertical-rl; transform: rotate(180deg); font: 10px/10px "Noto Sans", sans-serif; letter-spacing: 0; color: #a8a090; }
.rleft b:first-child { margin-top: -9px; }
.rleft b::after { content: ""; position: absolute; left: 0; top: 50%; height: 1px; width: 5px; background: #777; }
.rinches-v { position: absolute; left: 3px; bottom: -15px; height: 32px; writing-mode: vertical-rl; transform: rotate(180deg); font-size: 10px; line-height: 11px; letter-spacing: 0; color: #a09a90; background: #f2f2f2; }
.rmark-h { position: absolute; left: 0; top: 4px; width: 18px; border-top: 1px dashed #000; }

.canvas { position: relative; flex: none; width: 1005px; height: 502px; background: #fff; overflow: hidden; }
.page-shadow { position: absolute; left: 175px; top: 134px; width: 670px; height: 336px; background: #bfbfbf; }
.page { position: absolute; left: 169px; top: 130px; width: 671px; height: 336px; background: #fff; border: 1px solid #a8a8a8; }
.guide-h { position: absolute; left: 0; top: 214px; width: 1005px; border-top: 1px dashed #0000ff; }
.guide-v { position: absolute; left: 253px; top: 0; height: 502px; border-left: 1px dashed #0000ff; }
.speck { position: absolute; left: 167px; top: 128px; background: #fff; }
.h { position: absolute; left: 157px; width: 7px; height: 7px; background: #000; }
.h1 { top: 118px; } .h2 { top: 167px; } .h3 { top: 216px; }

.vscroll { flex: none; width: 16px; height: 502px; display: flex; flex-direction: column; background: #fdfdfd; }
.sb { position: relative; flex: none; display: block; width: 16px; height: 16px; background: #d4d0c8; border: 1px solid; border-color: #f4f4f0 #404040 #404040 #f4f4f0; }
.sb::before { content: ""; position: absolute; }
.sb-up::before { left: 3px; top: 5px; border: 4px solid transparent; border-bottom: 4px solid #000; border-top: 0; }
.sb-down::before { left: 3px; top: 5px; border: 4px solid transparent; border-top: 4px solid #000; border-bottom: 0; }
.sb-left::before { left: 4px; top: 3px; border: 4px solid transparent; border-right: 4px solid #000; border-left: 0; }
.sb-right::before { left: 5px; top: 3px; border: 4px solid transparent; border-left: 4px solid #000; border-right: 0; }
.vtrack1 { flex: none; height: 54px; }
.thumb-v { flex: none; height: 304px; background: #d4d0c8; border: 1px solid; border-color: #f4f4f0 #404040 #404040 #f4f4f0; }
.vtrack2 { flex: 1; }

.hscroll-row { flex: none; height: 17px; display: flex; margin-right: 6px; background: linear-gradient(90deg, #f2f2f2 19px, #fff 19px); position: relative; }
.hscroll-row::before { content: ""; position: absolute; left: 19px; right: 0; top: 0; height: 1px; background: #909090; }
.hscroll-row > * { margin-top: 1px; }
.pnav { flex: none; width: 223px; margin-left: 20px; height: 16px; display: flex; align-items: center; background: #d4d0c8; }
.pn { flex: none; height: 16px; display: flex; align-items: center; justify-content: center; border-right: 1px solid #f0f0f0; }
.pn-add { width: 16px; }
.pn-g { width: 15px; }
.pn-g2 { width: 20px; }
.pn-label { flex: none; width: 30px; margin-left: 12px; white-space: nowrap; }
.pn-g3 { width: 15px; margin-left: 17px; }
.ptab { flex: none; width: 66px; height: 16px; margin-left: 2px; background: #fff; padding-left: 14px; line-height: 15px; letter-spacing: -.4px; clip-path: polygon(0 0, 58px 0, 66px 9px, 66px 100%, 0 100%); }
.hsplit { flex: none; width: 5px; height: 13px; margin-left: 283px; margin-right: 1px; margin-top: 2px; border: 1px solid #aaa; border-width: 0 1px; }
.hgap1 { flex: none; width: 79px; }
.thumb-h { flex: none; width: 300px; height: 16px; background: #d4d0c8; border: 1px solid; border-color: #f4f4f0 #404040 #404040 #f4f4f0; }
.hgap2 { flex: none; width: 82px; }
.zoomtool { flex: none; width: 16px; height: 16px; background: #d4d0c8; padding: 1px; }

.colorbar { flex: 1; display: flex; align-items: center; background: #f2f2f2; border-top: 1px solid #d8d8d8; margin-right: 6px; }
.cb-grip { flex: none; width: 5px; height: 12px; margin-left: 3px; border: 1px solid #999; border-width: 0 1px; }
.cb-play { flex: none; width: 0; height: 0; border: 5px solid transparent; border-left: 5px solid #000; border-right: 0; margin-left: 4px; }
.cb-drop { margin-left: 7px; }
.cb-lt { margin-left: 6px; }
.cb-x { margin-left: 5px; }
.cb-text { margin-left: 294px; flex: none; width: 356px; white-space: nowrap; color: #bbb; font-style: italic; }
.cb-rt { margin-left: 281px; }
.cb-dbl { margin-left: 9px; }

/* Hints docker */
.hintsdock { flex: none; width: 251px; display: flex; flex-direction: column; background: #fff; border-left: 1px solid #d0d0d0; }
.hd-title { flex: none; height: 20px; background: #e9e9e9; border-bottom: 1px solid #bdbdbd; display: flex; align-items: center; padding-left: 1px; }
.hd-ff { margin-left: auto; margin-right: 2px; }
.hd-body { flex: none; height: 553px; margin: 3px 0 0 2px; background: #d4d0c8; border-right: 2px solid #505050; border-bottom: 2px solid #505050; display: flex; flex-direction: column; }
.hd-tabs { flex: none; height: 22px; display: flex; align-items: flex-end; }
.ht { display: block; flex: none; background: #d4d0c8; }
.ht-on { width: 49px; height: 22px; padding-left: 6px; line-height: 20px; border: 1px solid; border-color: #f0f0f0 #404040 transparent transparent; }
.ht-off { width: 46px; height: 20px; margin-left: 1px; padding-left: 3px; line-height: 19px; border: 1px solid; border-color: #f0f0f0 #404040 transparent #f0f0f0; }
.hd-pane { flex: none; height: 500px; margin: 0 4px 0 2px; background: #fff; display: flex; border-bottom: 1px solid #d4d0c8; }
.hd-content { flex: none; width: 223px; padding: 0 0 0 10px; font-size: 11px; line-height: 17px; letter-spacing: .02px; overflow: hidden; position: relative; }
.hc-head { margin: 19px 9px 0 0; width: 203px; height: 18px; border-bottom: 1px solid #666; font-size: 15px; font-weight: 400; line-height: 17px; letter-spacing: 0; color: #6fb01a; display: flex; justify-content: space-between; }
.hc-title { margin: 16px 0 0; width: 200px; font-size: 13.5px; font-weight: 700; line-height: 19px; letter-spacing: 0; color: #000; }
.hc-list { list-style: none; margin: 8px 0 0; padding: 0 0 0 6px; width: 201px; }
.hc-list li { position: relative; margin-bottom: 6px; }
.hc-list li::before { content: ""; position: absolute; left: -5px; top: 7px; width: 2px; height: 2px; background: #000; }
.hc-list b { color: #000; }
.hc-grid { position: relative; margin: 19px 0 0 31px; width: 141px; display: grid; grid-template-columns: repeat(3, 67px); grid-auto-rows: 65px; height: 137px; }
.hc-grid i, .hc-grid2 i { display: block; width: 7px; height: 7px; background: #000; }
.hc-x { display: block; width: 7px; height: 7px; background: linear-gradient(45deg, transparent 42%, #000 42% 58%, transparent 58%), linear-gradient(-45deg, transparent 42%, #000 42% 58%, transparent 58%); }
.hc-move { position: absolute; left: 19px; top: 6px; }
.hc-l2 { margin-top: 10px; }
.hc-grid2 { position: relative; margin: 15px 0 0 38px; display: flex; gap: 80px; }
.hc-diag { position: absolute; left: -7px; top: 1px; }

.hd-scroll { flex: none; width: 16px; margin: 2px 0 0 0; display: flex; flex-direction: column; }
.hd-thumb { flex: none; height: 200px; background: #d4d0c8; border: 1px solid; border-color: #f4f4f0 #404040 #404040 #f4f4f0; }
.hd-hatch { flex: 1; background: repeating-conic-gradient(#c8c8c8 0 25%, #fff 0 50%) 0 0 / 2px 2px; }
.hd-foot { flex: 1; display: flex; padding: 2px 0 0 2px; }
.hf-home { flex: none; width: 24px; display: flex; align-items: center; justify-content: center; }
.hf-mid { flex: none; width: 169px; background: #f2f2f2; }
.hf-arrows { flex: 1; display: flex; gap: 7px; align-items: center; padding-left: 4px; }

.dockers { flex: none; width: 21px; display: flex; flex-direction: column; background: #eaeaea; }
.dk-top { flex: none; height: 20px; background: #e9e9e9; border-bottom: 1px solid #bdbdbd; padding: 5px 0 0 6px; }
.dk-list { flex: 1; display: flex; flex-direction: column; border-left: 1px solid #00aeef; }
.dk { flex: none; height: 133px; padding-top: 4px; display: flex; flex-direction: column; align-items: center; background: #d6d6d6; }
.dk span { writing-mode: vertical-rl; margin-top: 5px; line-height: 16px; }
.dk-on { height: 72px; background: #cce4fb; }
.dk3 { height: 129px; }
.dk-plus { display: flex; justify-content: center; margin-top: 17px; }

.palette { flex: none; width: 18px; display: flex; flex-direction: column; background: #f2f2f2; }
.pal-top { flex: none; height: 55px; display: flex; flex-direction: column; align-items: center; }
.pal-grip { flex: none; width: 14px; height: 4px; margin-top: 4px; border: 1px solid #999; border-width: 1px 0; }
.pal-play { flex: none; width: 0; height: 0; margin-top: 3px; border: 5px solid transparent; border-left: 6px solid #000; border-right: 0; }
.pal-drop { margin-top: 5px; }
.pal-up { margin-top: 5px; }
.swatches { flex: none; height: 463px; overflow: hidden; }
.swatches i { display: block; height: 17px; }
.c01 { background: #231f20; } .c02 { background: #414042; } .c03 { background: #58595b; } .c04 { background: #6d6e71; }
.c05 { background: #808285; } .c06 { background: #939598; } .c07 { background: #a7a9ac; } .c08 { background: #bcbec0; }
.c09 { background: #d1d3d4; } .c10 { background: #e6e7e8; } .c11 { background: #fff; } .c12 { background: #2e3192; }
.c13 { background: #00aeef; } .c14 { background: #00a651; } .c15 { background: #fff200; } .c16 { background: #ed1c24; }
.c17 { background: #ec008c; } .c18 { background: #a54686; } .c19 { background: #f7821f; } .c20 { background: #f9a8ad; }
.c21 { background: #7d6860; } .c22 { background: #c5c3e0; } .c23 { background: #9a97c8; } .c24 { background: #6b8cc4; }
.c25 { background: #7670b0; } .c26 { background: #7f7aa4; } .c27 { background: #465d89; } .c28 { background: #4a4670; }
.pal-bot { flex: 1; display: flex; flex-direction: column; align-items: center; gap: 9px; padding-top: 8px; background: #eaeaea; }

/* Status bar */
.status { flex: none; height: 34px; display: flex; align-items: center; background: #f2f2f2; border-top: 1px solid #d6d6d6; border-bottom: 2px solid #fff; }
.st-xy { margin-left: 5px; flex: none; width: 94px; letter-spacing: -.4px; white-space: nowrap; }
.st-box { position: relative; flex: none; width: 14px; height: 14px; border: 1px solid #000; background: #fff; }
.st-box::before { content: ""; position: absolute; left: 4px; top: 2px; border: 4px solid transparent; border-left: 5px solid #000; border-right: 0; }
.st-info { margin-left: 45px; flex: none; width: 754px; white-space: nowrap; letter-spacing: -.36px; }
.st-fill { margin-left: 14px; }
.st-swatch { flex: none; display: block; width: 18px; height: 18px; border: 1px solid #777; margin-left: 5px; }
.st-white { background: #fff; }
.st-black { background: #231f20; margin-left: 8px; }
.st-cmyk { margin-left: 3px; flex: none; width: 78px; white-space: nowrap; letter-spacing: -.3px; }
.st-sep { flex: none; width: 1px; height: 22px; background: #d0d0d0; margin-left: 83px; }
.st-pen { margin-left: 8px; }
.st-cmyk2 { margin-left: 3px; white-space: nowrap; letter-spacing: -.42px; }

/* Taskbar */
.taskbar { flex: 1; display: flex; align-items: center; background: #d4d0c8; padding-left: 2px; }
.tk-start { flex: none; width: 52px; height: 39px; display: flex; align-items: center; padding-left: 2px; gap: 1px; background: #d4d0c8; border: 1px solid; border-color: #f6f6f2 #404040 #404040 #f6f6f2; font-size: 12px; color: #000; }
.tk-ico { flex: none; width: 49px; height: 36px; display: flex; align-items: center; justify-content: center; }
.tk-ie { margin-left: 9px; }
.tk-btn { flex: none; width: 48px; height: 39px; display: flex; align-items: center; justify-content: center; border: 1px solid; border-color: #f6f6f2 #404040 #404040 #f6f6f2; margin-right: 2px; }
.tk-chrome { margin-left: 3px; }
.tk-corel { border: 2px solid; border-color: #404040 #f6f6f2 #f6f6f2 #404040; }
.tk-fill { flex: 1; }
.tray { flex: none; width: 195px; height: 37px; margin-right: 3px; display: flex; align-items: center; border: 1px solid; border-color: #6d6d6d #f4f4f0 #f4f4f0 #6d6d6d; }
.tr-up { margin-left: 5px; }
.tr-flag { margin-left: 11px; }
.tr-pow { margin-left: 6px; }
.tr-net { margin-left: 9px; }
.tr-vol { margin-left: 8px; }
.clock { flex: none; width: 62px; margin-left: 7px; display: flex; flex-direction: column; align-items: center; font-size: 11px; line-height: 16px; letter-spacing: 0; }

/* Popup menus */
.popup { position: absolute; background: #fff; border: 1px solid #a0a0a0; display: flex; flex-direction: column; background-image: linear-gradient(#f0f0f0, #f0f0f0); background-repeat: no-repeat; background-size: 26px 100%; }
.effects { left: 224px; top: 42px; width: 176px; height: 360px; }
.submenu { left: 400px; top: 65px; width: 149px; height: 67px; }
.pi { position: relative; flex: none; height: 22px; display: flex; align-items: center; justify-content: space-between; padding: 0 19px 0 35px; border: 1px solid transparent; }
.pi u { text-underline-offset: 1px; }
.pi kbd { font: inherit; }
.arrow::after { content: ""; position: absolute; right: 6px; top: 6px; border: 4px solid transparent; border-left: 4px solid #000; border-right: 0; }
.pi-sel { background: #d2d6e0; border-color: #8a96b8; }
.pi-dis { color: #9a9a9a; }
.pico { position: absolute; left: 4px; top: 2px; }
.psep { flex: none; display: block; height: 1px; margin: 3px 2px 3px 27px; background: #d8d8d8; }
.submenu .pi { padding-left: 34px; justify-content: flex-start; }
```
